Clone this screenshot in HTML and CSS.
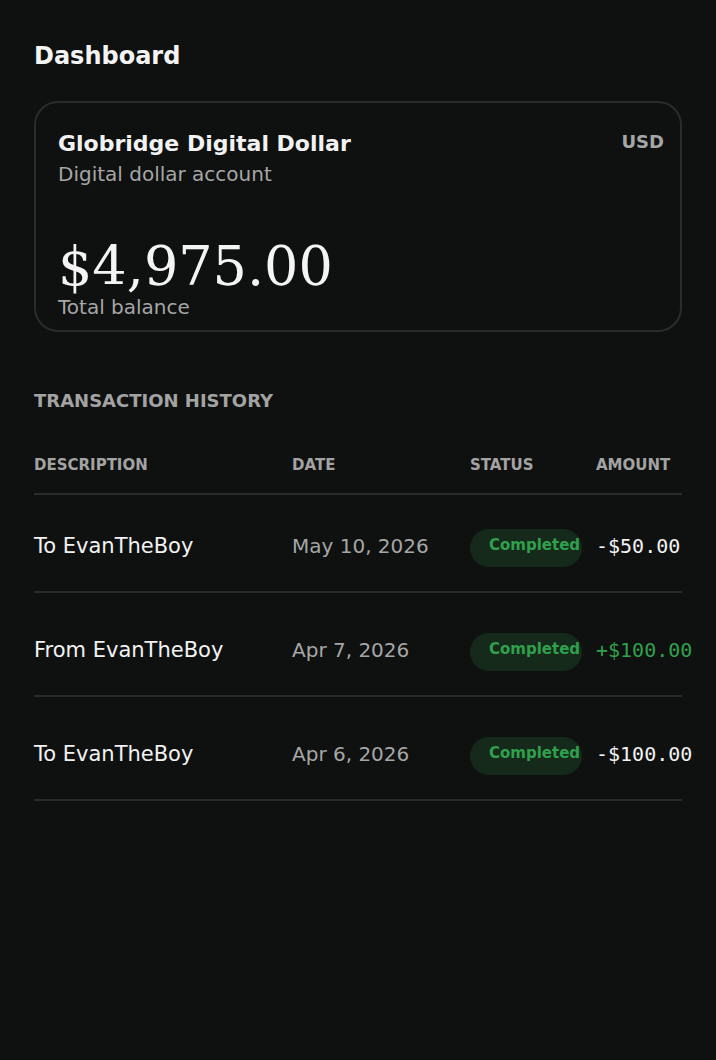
FILE: index.html
```html
<!DOCTYPE html>
<html lang="en">
<head>
<meta charset="utf-8">
<title>Dashboard</title>
<link rel="stylesheet" href="styles.css">
</head>
<body>
<main class="page">
  <h1 class="page-title">Dashboard</h1>

  <section class="card">
    <div class="card-head">
      <div>
        <div class="card-title">Globridge Digital Dollar</div>
        <div class="card-sub">Digital dollar account</div>
      </div>
      <div class="currency">USD</div>
    </div>
    <div class="balance">$4,975.00</div>
    <div class="balance-label">Total balance</div>
  </section>

  <h2 class="section-title">TRANSACTION HISTORY</h2>

  <div class="table">
    <div class="row head">
      <div class="cell">DESCRIPTION</div>
      <div class="cell">DATE</div>
      <div class="cell">STATUS</div>
      <div class="cell">AMOUNT</div>
    </div>
    <div class="row first">
      <div class="cell desc">To EvanTheBoy</div>
      <div class="cell date">May 10, 2026</div>
      <div class="cell"><span class="badge">Completed</span></div>
      <div class="cell amount">-$50.00</div>
    </div>
    <div class="row">
      <div class="cell desc">From EvanTheBoy</div>
      <div class="cell date">Apr 7, 2026</div>
      <div class="cell"><span class="badge">Completed</span></div>
      <div class="cell amount pos">+$100.00</div>
    </div>
    <div class="row">
      <div class="cell desc">To EvanTheBoy</div>
      <div class="cell date">Apr 6, 2026</div>
      <div class="cell"><span class="badge">Completed</span></div>
      <div class="cell amount">-$100.00</div>
    </div>
  </div>
</main>
</body>
</html>
```
FILE: styles.css
```css
* { box-sizing: border-box; }
html, body {
  margin: 0;
  background: #0f1110;
}
body {
  font-family: "DejaVu Sans", sans-serif;
  color: #f2f2f2;
}
.page {
  padding: 41px 34px 0 34px;
}
.page-title {
  margin: 0;
  font-size: 24px;
  font-weight: bold;
  line-height: 30px;
  color: #f4f4f4;
}
.card {
  margin-top: 30px;
  border: 2px solid #2a2c2b;
  border-radius: 24px;
  padding: 27px 16px 12px 22px;
  height: 231px;
}
.card-head {
  display: flex;
  justify-content: space-between;
  align-items: flex-start;
}
.card-title {
  font-size: 22px;
  font-weight: bold;
  line-height: 28px;
  color: #f2f2f2;
}
.card-sub {
  margin-top: 3px;
  font-size: 20px;
  line-height: 26px;
  color: #a6a6a6;
}
.currency {
  font-size: 18px;
  font-weight: bold;
  line-height: 24px;
  color: #a6a6a6;
}
.balance {
  margin-top: 52px;
  font-family: "DejaVu Serif", serif;
  font-size: 54px;
  line-height: 56px;
  color: #f4f4f4;
}
.balance-label {
  font-size: 20px;
  line-height: 24px;
  color: #a6a6a6;
}
.section-title {
  margin: 57px 0 0 0;
  font-size: 18px;
  font-weight: bold;
  line-height: 24px;
  color: #a3a3a3;
}
.table {
  margin-top: 42px;
  width: 648px;
}
.row {
  display: grid;
  grid-template-columns: 258px 178px 126px 86px;
  align-items: center;
  border-bottom: 2px solid #2a2c2b;
  padding: 40px 0 24px 0;
}
.row.first {
  padding-top: 34px;
}
.row.head {
  padding: 0 0 18px 0;
}
.row.head .cell {
  font-size: 15px;
  font-weight: bold;
  line-height: 20px;
  color: #a3a3a3;
}
.cell {
  white-space: nowrap;
}
.desc,
.date,
.amount {
  padding-bottom: 5px;
}
.desc {
  font-size: 21px;
  line-height: 26px;
  color: #f2f2f2;
}
.date {
  font-size: 20px;
  line-height: 26px;
  color: #a6a6a6;
}
.badge {
  display: block;
  width: 112px;
  height: 38px;
  border-radius: 19px;
  background: #162a1c;
  color: #2fa04b;
  font-size: 15px;
  font-weight: bold;
  line-height: 20px;
  padding: 6px 0 0 19px;
}
.amount {
  font-family: "DejaVu Sans Mono", monospace;
  font-size: 20px;
  line-height: 26px;
  color: #f2f2f2;
}
.amount.pos {
  color: #2fa04b;
}
```
